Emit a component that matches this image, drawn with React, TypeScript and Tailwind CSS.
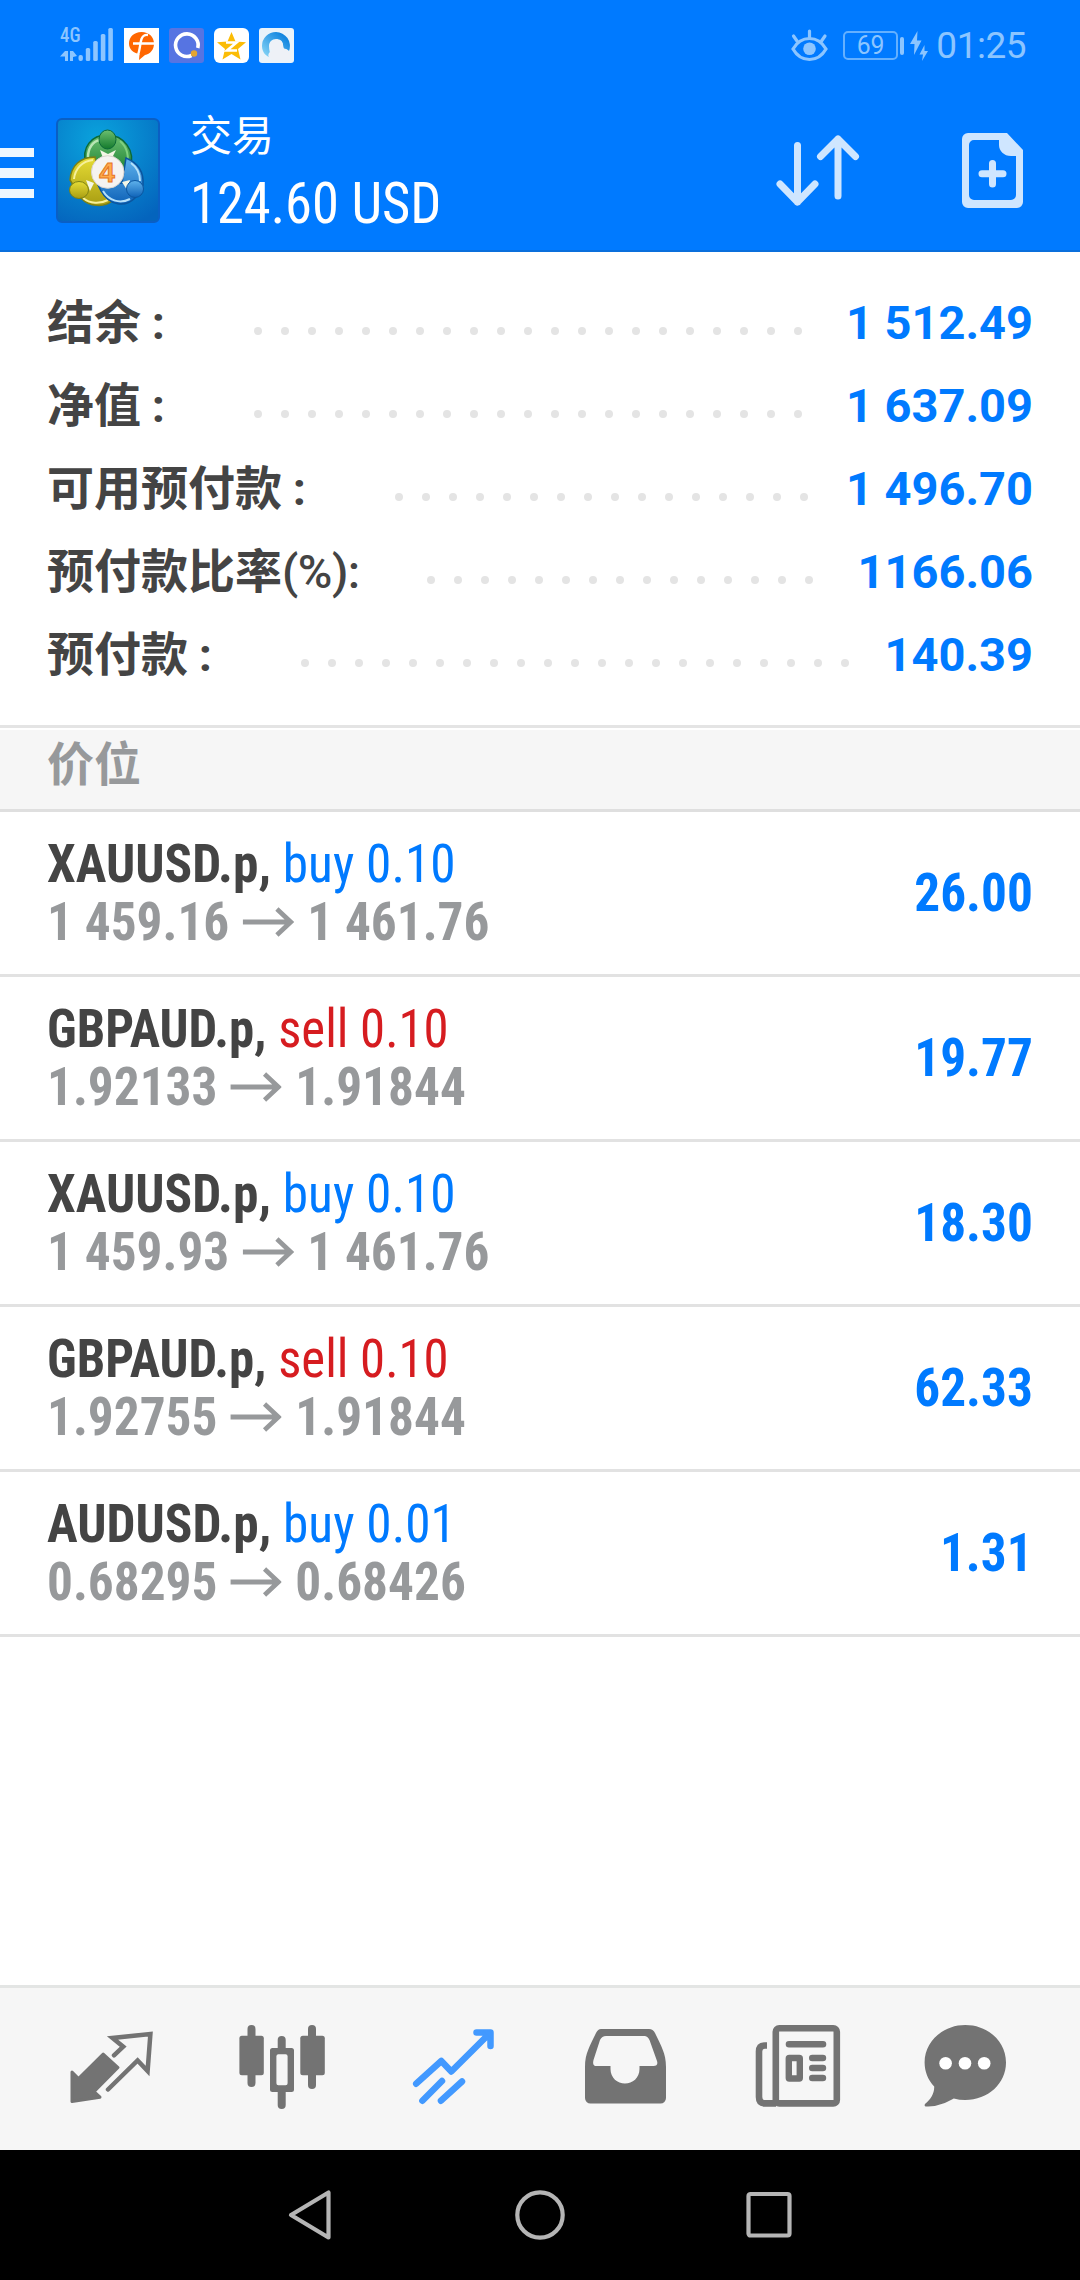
import type { ReactNode } from "react";

const summary = [
  { label: "结余", suffix: " :", value: "1 512.49", dots: 21, width: "w-[207px]" },
  { label: "净值", suffix: " :", value: "1 637.09", dots: 21, width: "w-[207px]" },
  { label: "可用预付款", suffix: " :", value: "1 496.70", dots: 16, width: "w-[348px]" },
  { label: "预付款比率", suffix: "(%):", value: "1166.06", dots: 15, width: "w-[380px]" },
  { label: "预付款", suffix: " :", value: "140.39", dots: 21, width: "w-[254px]" },
];

const positions = [
  { symbol: "XAUUSD.p,", side: "buy", volume: "0.10", open: "1 459.16", current: "1 461.76", profit: "26.00" },
  { symbol: "GBPAUD.p,", side: "sell", volume: "0.10", open: "1.92133", current: "1.91844", profit: "19.77" },
  { symbol: "XAUUSD.p,", side: "buy", volume: "0.10", open: "1 459.93", current: "1 461.76", profit: "18.30" },
  { symbol: "GBPAUD.p,", side: "sell", volume: "0.10", open: "1.92755", current: "1.91844", profit: "62.33" },
  { symbol: "AUDUSD.p,", side: "buy", volume: "0.01", open: "0.68295", current: "0.68426", profit: "1.31" },
];

function StatusBar() {
  return (
    <div className="flex h-[91px] items-center pl-[60px] pr-[54px] text-[#8cc5ff]">
      {/* Signal */}
      <div className="flex h-[35px] w-[18px] flex-col justify-between pb-[2px]">
        <span className="origin-left scale-x-90 font-['Roboto_Condensed'] text-[21px] font-medium leading-[15px]">4G</span>
        <svg width="17" height="10" viewBox="0 0 17 10" fill="currentColor">
          <path d="M0 5.5 5 0h3v10H5V5.5zM10 0h3l4 5-4 1v4h-3z" />
        </svg>
      </div>
      <svg width="35" height="35" viewBox="0 0 35 35" fill="currentColor">
        <rect x="0.5" y="27" width="4.4" height="6" rx="2" />
        <rect x="7.8" y="20" width="4.4" height="13" rx="1.6" />
        <rect x="15.2" y="13" width="4.6" height="20" rx="1.6" />
        <rect x="22.8" y="6" width="4.6" height="27" rx="1.6" />
        <rect x="30.3" y="0" width="4.6" height="33" rx="1.6" />
      </svg>

      {/* Notification icons */}
      <div className="ml-[11px] flex gap-[10px]">
        <svg width="35" height="35" viewBox="0 0 35 35">
          <rect width="35" height="35" fill="#fff" />
          <path d="M17.500 4C25 4 30 9 30 15.500c0 6.500-4 10.500-9 11.500l-6 5 .5-6C9 25 5 21 5 15.500 5 9 10 4 17.500 4z" fill="#f60" />
          <path d="M13.500 28c2.500-5 2.500-13 4-17 1.200-3 3-4.500 6.500-4M9 15.500h21" fill="none" stroke="#fff" strokeWidth="2.400" />
        </svg>
        <svg width="35" height="35" viewBox="0 0 35 35">
          <rect width="35" height="35" rx="3" fill="#5674e2" />
          <path d="M22.500 27.500a11.300 11.300 0 1 1 6.300-7.500" fill="none" stroke="#fff" strokeWidth="3.600" />
          <circle cx="25" cy="25.500" r="3.200" fill="#e3a532" />
        </svg>
        <svg width="35" height="35" viewBox="0 0 35 35">
          <rect width="35" height="35" rx="6" fill="#fff" />
          <path d="m17.500 4 4 9.500 10.500.7-8 6.800 2.500 10.500-9-5.500-9 5.500L11 21l-8-6.800 10.500-.7z" fill="#fbbc05" />
          <path d="M12 14.500h10.500L13 22.500h10" fill="none" stroke="#fff" strokeWidth="2.600" />
        </svg>
        <svg width="35" height="35" viewBox="0 0 35 35">
          <defs>
            <linearGradient id="cloudRing" x1="1" y1="0" x2="0" y2="1">
              <stop offset="0.2" stopColor="#1487e0" />
              <stop offset="1" stopColor="#8fdcf8" />
            </linearGradient>
          </defs>
          <rect width="35" height="35" rx="3" fill="#eaf3fa" />
          <path d="M17 4a14 14 0 0 1 13 19l-3-1c-2-1-3-3-3-5 0-4-3-6-7-6s-7 3-7 7 1 8 3 12C7 29 3 24 3 18A14 14 0 0 1 17 4z" fill="url(#cloudRing)" />
          <path d="M14 32c-6-1-6-8-1-9-4-5-2-11 4-11s8 4 7 9c3-1 6 1 7 4 2 3 1 7-3 7z" fill="#eef1f7" />
        </svg>
      </div>

      {/* System state */}
      <div className="ml-auto flex items-center">
        <svg width="37" height="33" viewBox="0 0 37 33" fill="none" stroke="currentColor" strokeWidth="3.2" strokeLinecap="round">
          <path d="M2 20c4-7 10-10.500 16.500-10.500S31 13 35 20c-4 7-10 10.500-16.500 10.500S6 27 2 20z" />
          <path d="M18.500 2v6M2.500 7 6 12M34 7l-3.500 5" />
          <circle cx="18.500" cy="19.800" r="6.300" fill="currentColor" stroke="none" />
        </svg>
        <span className="ml-[15px] flex h-[29px] w-[55px] items-center justify-center rounded-[5px] border-2 border-[#64b0ff] font-[Roboto] text-[26px]">
          <span className="scale-x-95">69</span>
        </span>
        <span className="ml-[2px] h-[18px] w-[4px] rounded-[2px] bg-[#8cc5ff]" />
        <svg className="ml-[6px]" width="18" height="30" viewBox="0 0 18 30" fill="currentColor">
          <path d="M7.500 0 0 13h4.500L4 24l7.500-14.500H7zM14.500 14l-5 9.500h3.500l-1 6.500 6-10h-3.500z" />
        </svg>
        <span className="ml-[8px] font-[Roboto] text-[37px] leading-[40px] tracking-[-0.5px]">01:25</span>
      </div>
    </div>
  );
}

function Logo() {
  return (
    <svg width="104" height="105" viewBox="0 0 104 105" className="ml-[22px] shrink-0">
      <defs>
        <radialGradient id="tile" cx="0.4" cy="0.2" r="0.9">
          <stop offset="0" stopColor="#0aa3dd" />
          <stop offset="1" stopColor="#0464bd" />
        </radialGradient>
        <linearGradient id="green" x1="0" y1="0" x2="0" y2="1">
          <stop offset="0" stopColor="#6cbf70" />
          <stop offset="1" stopColor="#137a2c" />
        </linearGradient>
        <linearGradient id="yellow" x1="0" y1="0" x2="0" y2="1">
          <stop offset="0" stopColor="#e6dc35" />
          <stop offset="1" stopColor="#a89d12" />
        </linearGradient>
        <linearGradient id="blue" x1="0" y1="0" x2="0" y2="1">
          <stop offset="0" stopColor="#5fb2ec" />
          <stop offset="1" stopColor="#0e62b8" />
        </linearGradient>
      </defs>
      <rect x="1" y="1" width="102" height="103" rx="5" fill="url(#tile)" stroke="#0a5fc4" strokeWidth="2" />
      <path d="M30 46c-5-17 6-29 21-29 17 0 29 16 23 33-1 4-4 6-7 8L37 44z" fill="url(#green)" stroke="#0c6a38" strokeWidth="1.500" />
      <path d="M32 39c0-9 5-16 12-17" fill="none" stroke="#b9e6b4" strokeWidth="2.500" />
      <path d="M64 23c7 6 10 16 6 26" fill="none" stroke="#7fd07f" strokeWidth="2" />
      <path d="M39 39C24 39 15 48 14 62l11 18c8 9 24 10 32 2l-14-22z" fill="url(#yellow)" stroke="#7c8114" strokeWidth="1.500" />
      <path d="M37 42c-11 1-18 9-19 19M27 80c7 6 17 6 25 2" fill="none" stroke="#f6f09a" strokeWidth="2" />
      <path d="M70 40c12 5 18 14 17 27L79 80c-9 9-25 9-34-7l-3-6 24-2z" fill="url(#blue)" stroke="#0b559f" strokeWidth="1.500" />
      <path d="M75 45c7 5 9 11 9 18M47 73c6 10 17 13 27 8" fill="none" stroke="#b5e0fa" strokeWidth="2" />
      <path d="m30 62 8 3-4 8zM74 62l-8 2 5 8zM44 32l8 4 8-4-4 8h-9z" fill="#f3f7e6" />
      <ellipse cx="51.500" cy="21.500" rx="8.500" ry="9.500" fill="url(#green)" stroke="#0c6a38" />
      <ellipse cx="23" cy="72" rx="9.500" ry="8.500" fill="url(#yellow)" stroke="#7c8114" />
      <ellipse cx="79" cy="71" rx="8.500" ry="8.500" fill="url(#blue)" stroke="#0b559f" />
      <circle cx="51.700" cy="54" r="16.300" fill="#f5f3f1" stroke="#d9d4cf" />
      <text x="51" y="63.500" textAnchor="middle" fill="#ffab4c" stroke="#e5761d" strokeWidth="1" className="font-['Liberation_Sans'] text-[28px] font-bold">4</text>
    </svg>
  );
}

function Toolbar() {
  return (
    <div className="flex h-[159px] items-center pr-[57px] text-[#cfe6ff]">
      <div className="mt-[5px] flex w-[34px] flex-col gap-[11px]">
        <span className="h-[9.500px] bg-[#eef7ff]" />
        <span className="h-[9.500px] bg-[#eef7ff]" />
        <span className="h-[9.500px] bg-[#eef7ff]" />
      </div>
      <Logo />
      <div className="ml-[30px] mt-[3px] text-white">
        <div className="mb-[2px] font-['Roboto','Noto_Sans_CJK_SC',sans-serif] text-[42px] leading-[59px]">交易</div>
        <div className="origin-left scale-x-94 font-['Roboto_Condensed',sans-serif] text-[58px] leading-[70px]">124.60 USD</div>
      </div>
      <svg className="ml-auto" width="84" height="76" viewBox="0 0 84 76" fill="none" stroke="currentColor" strokeWidth="7" strokeLinecap="round" strokeLinejoin="round">
        <path d="M21.500 12.500V69M4 51l17.500 18L39 51M62 63V6M44.500 23.500 62 6l17.500 17.500" />
      </svg>
      <svg className="ml-[102px]" width="61" height="75" viewBox="0 0 61 75">
        <path fillRule="evenodd" fill="currentColor" d="M6 0h39l16 17v52a6 6 0 0 1-6 6H6a6 6 0 0 1-6-6V6a6 6 0 0 1 6-6zm6 7a5 5 0 0 0-5 5v50a5 5 0 0 0 5 5h37a5 5 0 0 0 5-5V23h-5c-7 0-12-5-12-11V7z" />
        <path d="M30.500 30.500v20.500M20 40.700h21" fill="none" stroke="currentColor" strokeWidth="7" strokeLinecap="round" />
      </svg>
    </div>
  );
}

function Summary() {
  return (
    <div className="border-b-[3px] border-[#e4e4e4] pb-[28px] pl-[47px] pr-[47px] pt-[30px] font-['Roboto','Noto_Sans_CJK_SC',sans-serif] text-[47px] leading-[83px]">
      {summary.map((row) => (
        <div key={row.label} className="flex h-[83px] items-center">
          <span className={`${row.width} whitespace-pre pb-[2px] font-bold text-[#444444]`}>
            {row.label}
            <span className={row.suffix === " :" ? "[word-spacing:-1px]" : "font-medium tracking-[-0.5px]"}>{row.suffix}</span>
          </span>
          <div className="mt-[14px] flex gap-[19px]">
            {Array.from({ length: row.dots }, (_, i) => (
              <span key={i} className="size-[8px] rounded-full bg-[#e4e4e4]" />
            ))}
          </div>
          <span className="ml-auto pb-[2px] font-bold text-[#007aff]">{row.value}</span>
        </div>
      ))}
    </div>
  );
}

function Positions() {
  return (
    <div className="font-['Roboto_Condensed',sans-serif] text-[54px]">
      {positions.map((p, i) => (
        <div key={i} className="flex h-[165px] items-center justify-between border-b-[3px] border-[#e2e2e2] px-[47px]">
          <div className="leading-[58px]">
            <div className={`origin-left whitespace-pre ${p.side === "buy" ? "scale-x-95" : "scale-x-94"}`}>
              <span className="font-bold text-[#444444]">{p.symbol} </span>
              <span className={p.side === "buy" ? "text-[#007aff]" : "text-[#d61c20]"}>
                {p.side} {p.volume}
              </span>
            </div>
            <div className="flex origin-left scale-x-95 items-center font-bold text-[#97999b]">
              <span>{p.open}</span>
              <svg className="mx-[14px]" width="54" height="30" viewBox="0 0 54 30" fill="none" stroke="currentColor" strokeWidth="5">
                <path d="M0 15h51M36 2l14.500 13L36 28" />
              </svg>
              <span>{p.current}</span>
            </div>
          </div>
          <span className="origin-right scale-x-95 font-bold leading-[58px] text-[#007aff]">{p.profit}</span>
        </div>
      ))}
    </div>
  );
}

function TabIcon({ children, active }: { children: ReactNode; active?: boolean }) {
  return (
    <div className={`flex flex-1 items-center justify-center ${active ? "text-[#4299ff]" : "text-[#737373]"}`}>
      <svg width="96" height="96" viewBox="0 0 96 96" fill="none" stroke="currentColor" strokeLinecap="round" strokeLinejoin="round">
        {children}
      </svg>
    </div>
  );
}

function TabBar() {
  return (
    <div className="flex h-[165px] border-t-[3px] border-[#e3e5e4] bg-[#f6f6f6] pl-[26px] pr-[29px]">
      {/* Quotes */}
      <TabIcon>
        <path d="M9 51l6.500 6.500L40.200 33 55 46.500 31 70.700l6 5.500L9 80.500z" fill="currentColor" strokeWidth="3" />
        <path d="M51 34.300l9.200-8.600L49.500 17l37.900-4-2.800 37-10-10.500L45 68.500" strokeWidth="4.500" strokeLinejoin="miter" />
      </TabIcon>
      {/* Charts */}
      <TabIcon>
        <g fill="currentColor" stroke="none">
          <rect x="13.500" y="4" width="8" height="62" rx="4" />
          <rect x="5.400" y="14.700" width="24.400" height="39.500" rx="2.500" />
          <rect x="74" y="4" width="8" height="64" rx="4" />
          <rect x="66.300" y="14.700" width="24.500" height="39.500" rx="2.500" />
          <path d="M43.700 28V19a4 4 0 0 1 8 0v9z" />
          <path d="M43.700 70v14a4 4 0 0 0 8 0V70z" />
          <path fillRule="evenodd" d="M38.500 27h19a2.500 2.500 0 0 1 2.500 2.500v39a2.500 2.500 0 0 1-2.500 2.500h-19a2.500 2.500 0 0 1-2.500-2.500v-39a2.500 2.500 0 0 1 2.500-2.500zm5.900 6.300a2 2 0 0 0-2 2v27a2 2 0 0 0 2 2h7.200a2 2 0 0 0 2-2v-27a2 2 0 0 0-2-2z" />
        </g>
      </TabIcon>
      {/* Trade */}
      <TabIcon active>
        <path d="M11.200 62.700 36.300 40l10 10.500L85 12M71.500 11.500H85.500V25" strokeWidth="6.500" />
        <path d="M78 9h9v10z" fill="currentColor" stroke="none" />
        <path d="M17.400 79.700 37 60M36 79.700 57 60.500" strokeWidth="6.500" />
      </TabIcon>
      {/* History */}
      <TabIcon>
        <path
          fillRule="evenodd"
          fill="currentColor"
          stroke="none"
          d="M25 8h48q4 0 6 4c6 13 11 20 11 34v31a5.500 5.500 0 0 1-5.500 5.500h-70A5.500 5.500 0 0 1 9 77V46c0-14 5-21 11-34q2-4 5-4zm5 7q-4 0-6 4l-6.500 20q-1.500 6 3 6h14v3c0 9 7 14.500 14.500 14.500S63.500 57 63.500 48v-3h14q5 0 3.500-5l-7.500-21q-2-4-5-4z"
        />
      </TabIcon>
      {/* News */}
      <TabIcon>
        <rect x="28.800" y="7.200" width="61" height="75.200" rx="3.500" strokeWidth="6.600" />
        <path d="M20 24.500h-2q-6 0-6 6V76q0 6.400 6 6.400h11" strokeWidth="6.600" strokeLinecap="butt" />
        <path d="M42 23.300h34M65.300 37h10.600M65.300 47h10.600M65.300 57h10.600" strokeWidth="6.600" />
        <rect x="41.800" y="37" width="11" height="20.500" rx="0.500" strokeWidth="6.400" />
      </TabIcon>
      {/* Messages */}
      <TabIcon>
        <path
          fill="currentColor"
          stroke="none"
          d="M47.300 4C70 4 88 20.500 88 41.500S70 79 47.300 79q-6 0-11.500-1.500C28 82 18 86 8.500 85.500c-2 0-2.500-1.500-1-3 5-4 9-10 8.700-17C10 59 6.600 50.500 6.600 41.500 6.600 20.500 25 4 47.300 4z"
        />
        <g fill="#fff" stroke="none">
          <circle cx="27.600" cy="42.300" r="6.300" />
          <circle cx="47" cy="42.300" r="6.300" />
          <circle cx="66.200" cy="42.300" r="6.300" />
        </g>
      </TabIcon>
    </div>
  );
}

function SystemNav() {
  return (
    <div className="flex h-[130px] items-center justify-center bg-black text-[#b5b5b5]">
      <svg width="50" height="54" viewBox="0 0 50 54" fill="none" stroke="currentColor" strokeWidth="4.200" strokeLinejoin="round">
        <path d="M7 27 44.500 4.500v45z" />
      </svg>
      <svg className="mx-[179px]" width="54" height="54" viewBox="0 0 54 54" fill="none" stroke="currentColor" strokeWidth="4.200">
        <circle cx="27" cy="27" r="22.700" />
      </svg>
      <svg width="50" height="54" viewBox="0 0 50 54" fill="none" stroke="currentColor" strokeWidth="4.200">
        <rect x="2.500" y="6" width="41" height="41.500" rx="2" />
      </svg>
    </div>
  );
}

export default function App() {
  return (
    <div className="flex h-[2280px] w-[1080px] flex-col overflow-hidden bg-white">
      <header className="border-b-2 border-[#0a6fdc] bg-[#007aff]">
        <StatusBar />
        <Toolbar />
      </header>
      <Summary />
      <div className="h-[84px] border-b-[3px] border-t-2 border-b-[#dfdfdf] border-t-white bg-[#f6f6f6] pl-[47px] font-['Roboto','Noto_Sans_CJK_SC',sans-serif] text-[47px] font-bold leading-[70px] text-[#97999b]">
        价位
      </div>
      <Positions />
      <div className="flex-1" />
      <TabBar />
      <SystemNav />
    </div>
  );
}
